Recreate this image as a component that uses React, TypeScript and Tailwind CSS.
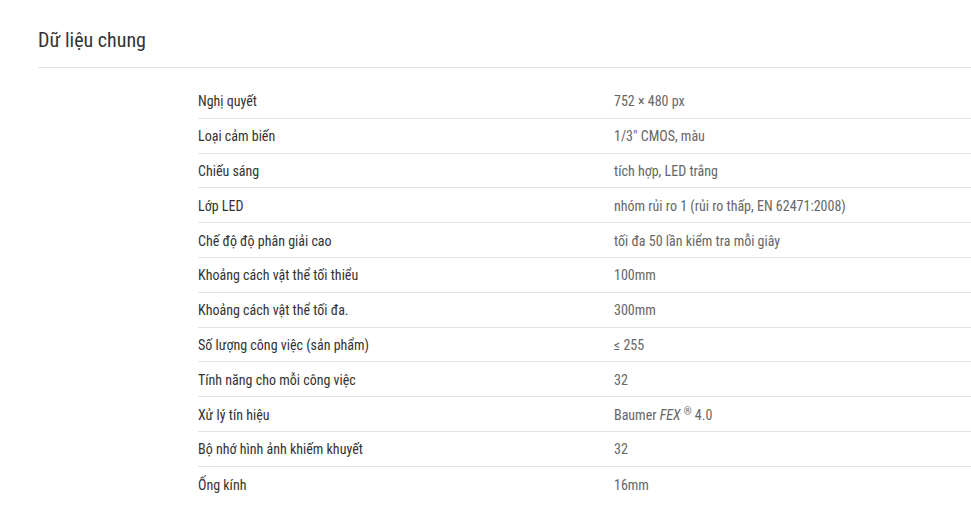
import React from "react";

const rows: [React.ReactNode, React.ReactNode][] = [
  ["Nghị quyết", "752 × 480 px"],
  ["Loại cảm biến", '1/3" CMOS, màu'],
  ["Chiếu sáng", "tích hợp, LED trắng"],
  ["Lớp LED", "nhóm rủi ro 1 (rủi ro thấp, EN 62471:2008)"],
  ["Chế độ độ phân giải cao", "tối đa 50 lần kiểm tra mỗi giây"],
  ["Khoảng cách vật thể tối thiểu", "100mm"],
  ["Khoảng cách vật thể tối đa.", "300mm"],
  ["Số lượng công việc (sản phẩm)", "≤ 255"],
  ["Tính năng cho mỗi công việc", "32"],
  [
    "Xử lý tín hiệu",
    <>
      Baumer <i>FEX</i> <sup className="text-[10px]">®</sup> 4.0
    </>,
  ],
  ["Bộ nhớ hình ảnh khiếm khuyết", "32"],
  ["Ống kính", "16mm"],
];

export default function App() {
  return (
    <div
      className="min-h-[523px] bg-white pl-[38px] pt-[27px] [font-stretch:condensed]"
      style={{ fontFamily: "'Roboto Condensed', Roboto, 'Noto Sans', sans-serif" }}
    >
      <h2 className="text-[20px] leading-[26px] text-[#333]">Dữ liệu chung</h2>
      <div className="mt-[14px] border-t border-[#e3e3e3]" />
      <div className="ml-[160px] mt-[16px]">
        {rows.map(([k, v], i) => (
          <div
            key={i}
            className={`flex h-[34.8px] items-center text-[14px] ${
              i < rows.length - 1 ? "border-b border-[#e3e3e3]" : ""
            }`}
          >
            <div className="w-[416px] pt-[2px] text-[#333]">{k}</div>
            <div className="pt-[2px] text-[#666]">{v}</div>
          </div>
        ))}
      </div>
    </div>
  );
}
